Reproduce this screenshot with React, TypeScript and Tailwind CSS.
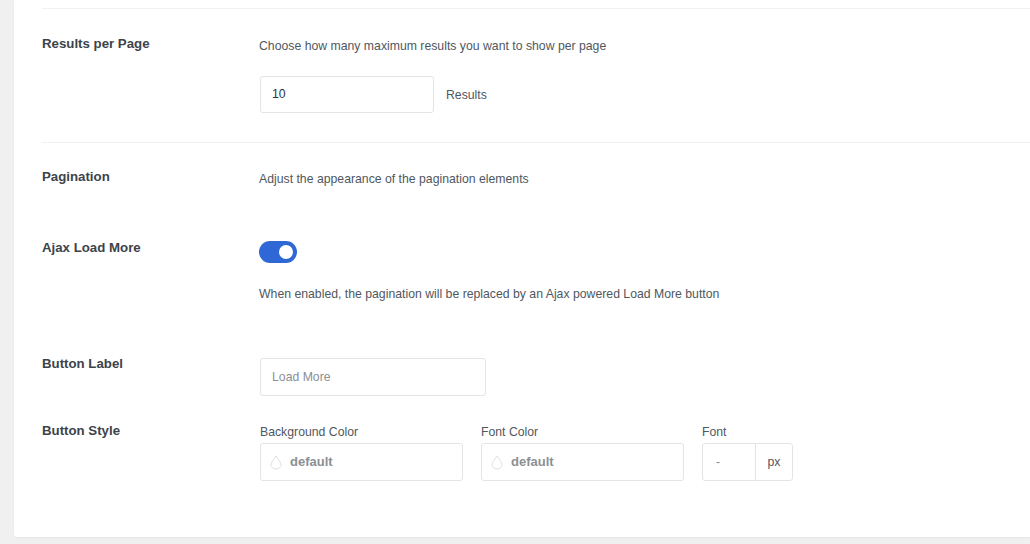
import React from 'react';

const font = { fontFamily: '"Liberation Sans", Arial, sans-serif' };

function Droplet() {
  return (
    <svg width="12" height="15" viewBox="0 0 12 15" fill="none" className="shrink-0">
      <path
        d="M6 1 C4.4 3.8 1 7 1 9.8 C1 12.3 3.2 14 6 14 C8.8 14 11 12.3 11 9.8 C11 7 7.6 3.8 6 1 Z"
        stroke="#e0e0e2"
        strokeWidth="1"
      />
    </svg>
  );
}

function ColorField({ label }: { label: string }) {
  return (
    <div className="flex w-[203px] flex-col">
      <span className="text-[12.25px] leading-4 text-[#50575e]">{label}</span>
      <div className="mt-[3px] flex h-[38px] items-center gap-[8px] rounded-[3px] border border-[#e2e4e7] bg-white pl-[9px]">
        <Droplet />
        <span className="text-[13px] font-bold text-[#8c8f94]">default</span>
      </div>
    </div>
  );
}

export default function App() {
  return (
    <div className="min-h-[544px] w-full overflow-hidden bg-[#f0f0f1] pl-[14px]" style={font}>
      <div className="h-[537px] rounded-bl-[3px] bg-white pl-[28px] shadow-[0_1px_2px_rgba(0,0,0,0.05)]">
        <div className="pt-[8px]">
          <div className="border-t border-[#f0f0f1]" />

          {/* Results per Page */}
          <div className="flex pt-[27px]">
            <div className="w-[217px] shrink-0 text-[13.25px] font-bold leading-4 text-[#3c434a]">
              Results per Page
            </div>
            <div className="pt-[2px]">
              <p className="text-[12.25px] leading-4 text-[#50575e]">
                Choose how many maximum results you want to show per page
              </p>
              <div className="mt-[22px] flex items-center">
                <div className="ml-px flex h-[37px] w-[174px] items-center rounded-[3px] border border-[#e2e4e7] px-[11px] text-[12.25px] text-[#2c3338]">
                  10
                </div>
                <span className="ml-[12px] pt-px text-[12.25px] text-[#50575e]">Results</span>
              </div>
            </div>
          </div>

          <div className="mt-[29px] border-t border-[#f0f0f1]" />

          {/* Pagination */}
          <div className="flex pt-[26px]">
            <div className="w-[217px] shrink-0 text-[13.25px] font-bold leading-4 text-[#3c434a]">
              Pagination
            </div>
            <p className="pt-[2px] text-[12.25px] leading-4 text-[#50575e]">
              Adjust the appearance of the pagination elements
            </p>
          </div>

          {/* Ajax Load More */}
          <div className="mt-[53px] flex">
            <div className="w-[217px] shrink-0 text-[13.25px] font-bold leading-4 text-[#3c434a]">
              Ajax Load More
            </div>
            <div className="pt-px">
              <div className="flex h-[22px] w-[38px] items-center justify-end rounded-full bg-[#2f68d6] pr-[2px]">
                <div className="h-[18px] w-[18px] rounded-full border-2 border-[#2f68d6] bg-white" />
              </div>
              <p className="mt-[23px] text-[12.25px] leading-4 text-[#50575e]">
                When enabled, the pagination will be replaced by an Ajax powered Load More button
              </p>
            </div>
          </div>

          {/* Button Label */}
          <div className="mt-[54px] flex">
            <div className="w-[217px] shrink-0 text-[13.25px] font-bold leading-4 text-[#3c434a]">
              Button Label
            </div>
            <div className="ml-px mt-[2px] flex h-[38px] w-[226px] items-center rounded-[3px] border border-[#e2e4e7] px-[11px] text-[12.25px] text-[#8c8f94]">
              Load More
            </div>
          </div>

          {/* Button Style */}
          <div className="mt-[27px] flex">
            <div className="w-[217px] shrink-0 text-[13.25px] font-bold leading-4 text-[#3c434a]">
              Button Style
            </div>
            <div className="ml-px flex gap-[18px] pt-px">
              <ColorField label="Background Color" />
              <ColorField label="Font Color" />
              <div className="flex flex-col">
                <span className="text-[12.25px] leading-4 text-[#50575e]">Font</span>
                <div className="mt-[3px] flex h-[38px] w-[91px] rounded-[3px] border border-[#e2e4e7]">
                  <div className="flex w-[53px] items-center border-r border-[#e2e4e7] pl-[13px] text-[12.25px] text-[#8c8f94]">
                    -
                  </div>
                  <div className="flex flex-1 items-center justify-center text-[12.25px] text-[#50575e]">
                    px
                  </div>
                </div>
              </div>
            </div>
          </div>
        </div>
      </div>
    </div>
  );
}
